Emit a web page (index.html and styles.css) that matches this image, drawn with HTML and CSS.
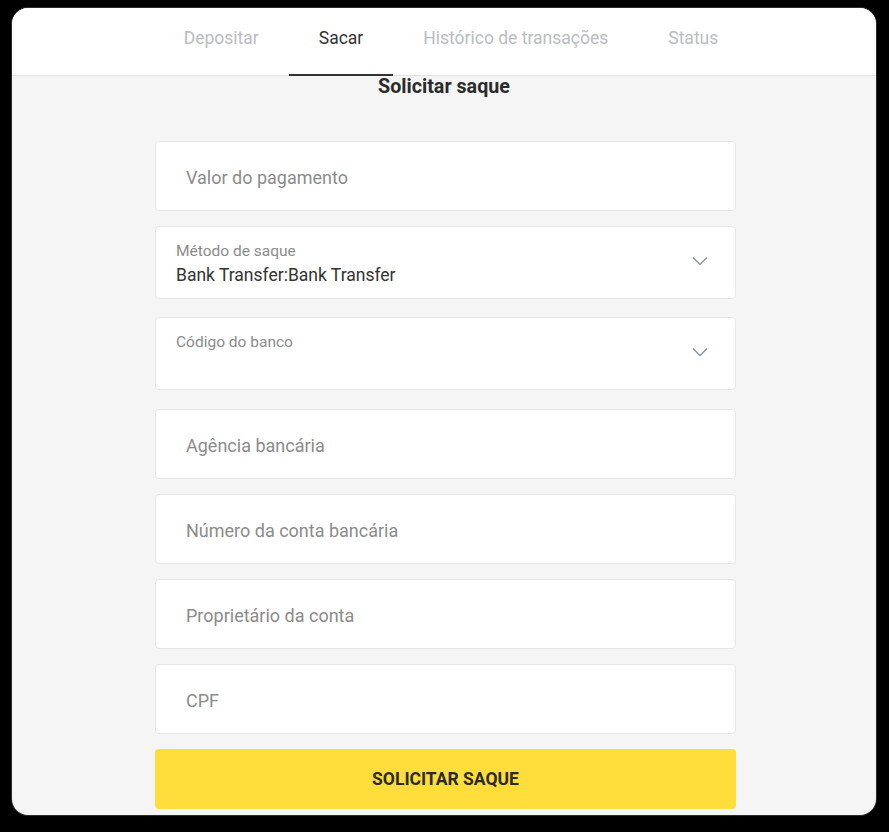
FILE: index.html
```html
<!DOCTYPE html>
<html lang="pt">
<head>
<meta charset="utf-8">
<title>Solicitar saque</title>
<link rel="stylesheet" href="styles.css">
</head>
<body>
<div class="card">
  <nav class="tabs">
    <div class="tab-list">
      <a class="tab">Depositar</a>
      <a class="tab active">Sacar</a>
      <a class="tab">Histórico de transações</a>
      <a class="tab">Status</a>
    </div>
  </nav>
  <main class="content">
    <h1 class="title">Solicitar saque</h1>
    <form class="form">
      <div class="field field-input f-gap-a">
        <span class="placeholder">Valor do pagamento</span>
      </div>
      <div class="field field-select f-gap-b">
        <div class="select-text">
          <span class="label">Método de saque</span>
          <span class="value">Bank Transfer:Bank Transfer</span>
        </div>
        <svg class="chevron" width="16" height="10" viewBox="0 0 16 10"><path d="M1 1.5 L8 8.5 L15 1.5" fill="none" stroke="#8e959f" stroke-width="1.5"/></svg>
      </div>
      <div class="field field-select f-gap-c">
        <div class="select-text">
          <span class="label">Código do banco</span>
          <span class="value"></span>
        </div>
        <svg class="chevron" width="16" height="10" viewBox="0 0 16 10"><path d="M1 1.5 L8 8.5 L15 1.5" fill="none" stroke="#8e959f" stroke-width="1.5"/></svg>
      </div>
      <div class="field field-input f-gap-a">
        <span class="placeholder">Agência bancária</span>
      </div>
      <div class="field field-input f-gap-a">
        <span class="placeholder">Número da conta bancária</span>
      </div>
      <div class="field field-input f-gap-a">
        <span class="placeholder">Proprietário da conta</span>
      </div>
      <div class="field field-input f-gap-a">
        <span class="placeholder">CPF</span>
      </div>
      <button type="button" class="submit">SOLICITAR SAQUE</button>
    </form>
  </main>
</div>
</body>
</html>
```

FILE: styles.css
```css
* { box-sizing: border-box; }

html, body {
  margin: 0;
  padding: 0;
  background: #000;
  font-family: Roboto, "Liberation Sans", Arial, sans-serif;
}

body {
  padding: 8px 0 0 12px;
  height: 832px;
  overflow: hidden;
}

.card {
  width: 864px;
  height: 807px;
  background: #f5f5f5;
  border-radius: 16px;
  overflow: hidden;
  box-shadow: 0 0 0 1px #2c2c2c;
  display: flex;
  flex-direction: column;
}

.tabs {
  background: #fff;
  height: 68px;
  border-bottom: 1px solid #e2e2e2;
  display: flex;
  justify-content: center;
  padding-left: 14px;
  flex-shrink: 0;
}

.tab-list {
  display: flex;
}

.tab {
  display: block;
  padding: 18px 30px 0;
  height: 68px;
  margin-bottom: -1px;
  font-size: 17.5px;
  line-height: 24px;
  color: #b9bcc0;
  border-bottom: 2px solid transparent;
  white-space: nowrap;
}

.tab.active {
  color: #333;
  border-bottom-color: #333;
}

.content {
  display: flex;
  flex-direction: column;
  align-items: center;
}

.title {
  margin: 1px 0 0;
  font-size: 19.7px;
  line-height: 20px;
  font-weight: 700;
  color: #2b2b2b;
}

.form {
  width: 581px;
  margin: 44px 0 0 3px;
  display: flex;
  flex-direction: column;
}

.field {
  background: #fff;
  border: 1px solid #e6e6e6;
  border-radius: 4px;
}

.field-input {
  height: 70px;
  display: flex;
  align-items: center;
  padding: 4px 20px 0 30px;
}

.placeholder {
  font-size: 18px;
  line-height: 24px;
  color: #8b8b8b;
}

.field-select {
  height: 73px;
  display: flex;
  align-items: center;
  justify-content: space-between;
  padding: 0 27px 0 20px;
}

.f-gap-b { margin-top: 15px; }
.f-gap-c { margin-top: 18px; }
.f-gap-a { margin-top: 15px; }
.form > .field:first-child { margin-top: 0; }
.form > .field-select + .field-input { margin-top: 19px; }

.select-text {
  display: flex;
  flex-direction: column;
  align-self: flex-start;
  padding-top: 14px;
}

.label {
  font-size: 15.5px;
  line-height: 20px;
  color: #8b8b8b;
}

.value {
  font-size: 17.5px;
  line-height: 24px;
  margin-top: 2px;
  min-height: 24px;
  color: #333;
}

.chevron {
  display: block;
  margin-top: -4px;
}

.submit {
  margin-top: 15px;
  height: 60px;
  border: none;
  border-radius: 4px;
  background: #ffdd3b;
  font-family: Roboto, "Liberation Sans", Arial, sans-serif;
  font-size: 17.5px;
  font-weight: 700;
  color: #2b2b2b;
  padding: 0;
  cursor: pointer;
}
```
